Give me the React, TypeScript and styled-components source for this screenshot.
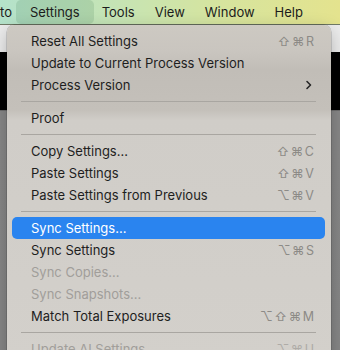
import styled, { createGlobalStyle } from "styled-components";

const GlobalStyle = createGlobalStyle`
  html, body {
    margin: 0;
    padding: 0;
    overflow: hidden;
  }
  body {
    font-family: "Inter", "Liberation Sans", sans-serif;
    -webkit-font-smoothing: antialiased;
  }
`;

const Screen = styled.div`
  width: 340px;
  height: 350px;
  overflow: hidden;
  display: flex;
  flex-direction: column;
`;

const MenuBar = styled.header`
  height: 24px;
  flex-shrink: 0;
  display: flex;
  align-items: stretch;
  background: linear-gradient(90deg, #b4e2ca 0%, #c6e4b4 35%, #d6e49e 65%, #e4e38e 100%);
  border-bottom: 1px solid #707a66;
  font-size: 13px;
  color: #1c1c1c;
`;

const MenuTitle = styled.div<{ $active?: boolean; $cut?: boolean }>`
  display: flex;
  align-items: center;
  white-space: nowrap;
  padding: ${(p) => (p.$cut ? "0 4px 0 0" : p.$active ? "0 14px" : "0 10px")};
  margin-right: ${(p) => (p.$active ? "-2px" : "0")};
  border-radius: 5px;
  background: ${(p) => (p.$active ? "rgba(20, 80, 40, 0.12)" : "transparent")};
`;

const Desktop = styled.main`
  flex: 1;
  padding: 0 9px 0 7px;
  background: linear-gradient(
    to bottom,
    #ececec 0px,
    #ececec 27px,
    #000 27px,
    #000 85px,
    #6e6e6e 85px,
    #6e6e6e 86px,
    #888 86px,
    #878787 100%
  );
`;

const Dropdown = styled.nav`
  padding: 5px 0;
  border-radius: 7px;
  background: linear-gradient(
    to bottom,
    #cdc9c2 0px,
    #c9c5bf 27px,
    #c1bdb7 45px,
    #c4c0ba 85px,
    #d0cdc8 95px,
    #d3d0cb 100%
  );
  box-shadow: 0 0 0 0.5px rgba(0, 0, 0, 0.25), 0 6px 18px rgba(0, 0, 0, 0.25);
  font-size: 13px;
`;

const Item = styled.div<{ $highlighted?: boolean; $disabled?: boolean }>`
  height: 22px;
  margin: 0 6px 0 5px;
  padding: 0 11px 0 19px;
  display: flex;
  align-items: center;
  justify-content: space-between;
  border-radius: 5px;
  white-space: nowrap;
  background: ${(p) => (p.$highlighted ? "#2a84ef" : "transparent")};
  color: ${(p) =>
    p.$highlighted ? "#ffffff" : p.$disabled ? "#a19e9a" : "#1e1e1e"};
`;

const Shortcut = styled.span<{ $disabled?: boolean }>`
  font-family: "Inter", "DejaVu Sans", sans-serif;
  font-size: 12.5px;
  letter-spacing: 1.5px;
  margin-right: -1.5px;
  color: ${(p) => (p.$disabled ? "#aeaba7" : "#8c8a86")};
`;

const Separator = styled.div`
  height: 11px;
  margin: 0 15px 0 14px;
  display: flex;
  align-items: center;
  &::before {
    content: "";
    flex: 1;
    height: 1px;
    background: #a9a6a1;
  }
`;

const Chevron = () => (
  <svg width="8" height="10" viewBox="0 0 8 10" style={{ marginRight: 1 }}>
    <polyline
      points="2,1.5 5.5,5 2,8.5"
      fill="none"
      stroke="#262626"
      strokeWidth="1.6"
      strokeLinecap="round"
      strokeLinejoin="round"
    />
  </svg>
);

type Entry =
  | { sep: true }
  | {
      sep?: false;
      label: string;
      keys?: string;
      submenu?: boolean;
      disabled?: boolean;
      highlighted?: boolean;
    };

const entries: Entry[] = [
  { label: "Reset All Settings", keys: "⇧⌘R" },
  { label: "Update to Current Process Version" },
  { label: "Process Version", submenu: true },
  { sep: true },
  { label: "Proof" },
  { sep: true },
  { label: "Copy Settings...", keys: "⇧⌘C" },
  { label: "Paste Settings", keys: "⇧⌘V" },
  { label: "Paste Settings from Previous", keys: "⌥⌘V" },
  { sep: true },
  { label: "Sync Settings...", highlighted: true },
  { label: "Sync Settings", keys: "⌥⌘S" },
  { label: "Sync Copies...", disabled: true },
  { label: "Sync Snapshots...", disabled: true },
  { label: "Match Total Exposures", keys: "⌥⇧⌘M" },
  { sep: true },
  { label: "Update AI Settings", keys: "⌥⌘U", disabled: true },
];

export default function App() {
  return (
    <>
      <GlobalStyle />
      <Screen>
        <MenuBar>
          <MenuTitle $cut>to</MenuTitle>
          <MenuTitle $active>Settings</MenuTitle>
          <MenuTitle>Tools</MenuTitle>
          <MenuTitle>View</MenuTitle>
          <MenuTitle>Window</MenuTitle>
          <MenuTitle>Help</MenuTitle>
        </MenuBar>

        <Desktop>
          <Dropdown>
            {entries.map((e, i) =>
              e.sep ? (
                <Separator key={i} />
              ) : (
                <Item key={i} $highlighted={e.highlighted} $disabled={e.disabled}>
                  <span>{e.label}</span>
                  {e.keys && <Shortcut $disabled={e.disabled}>{e.keys}</Shortcut>}
                  {e.submenu && <Chevron />}
                </Item>
              )
            )}
          </Dropdown>
        </Desktop>
      </Screen>
    </>
  );
}
